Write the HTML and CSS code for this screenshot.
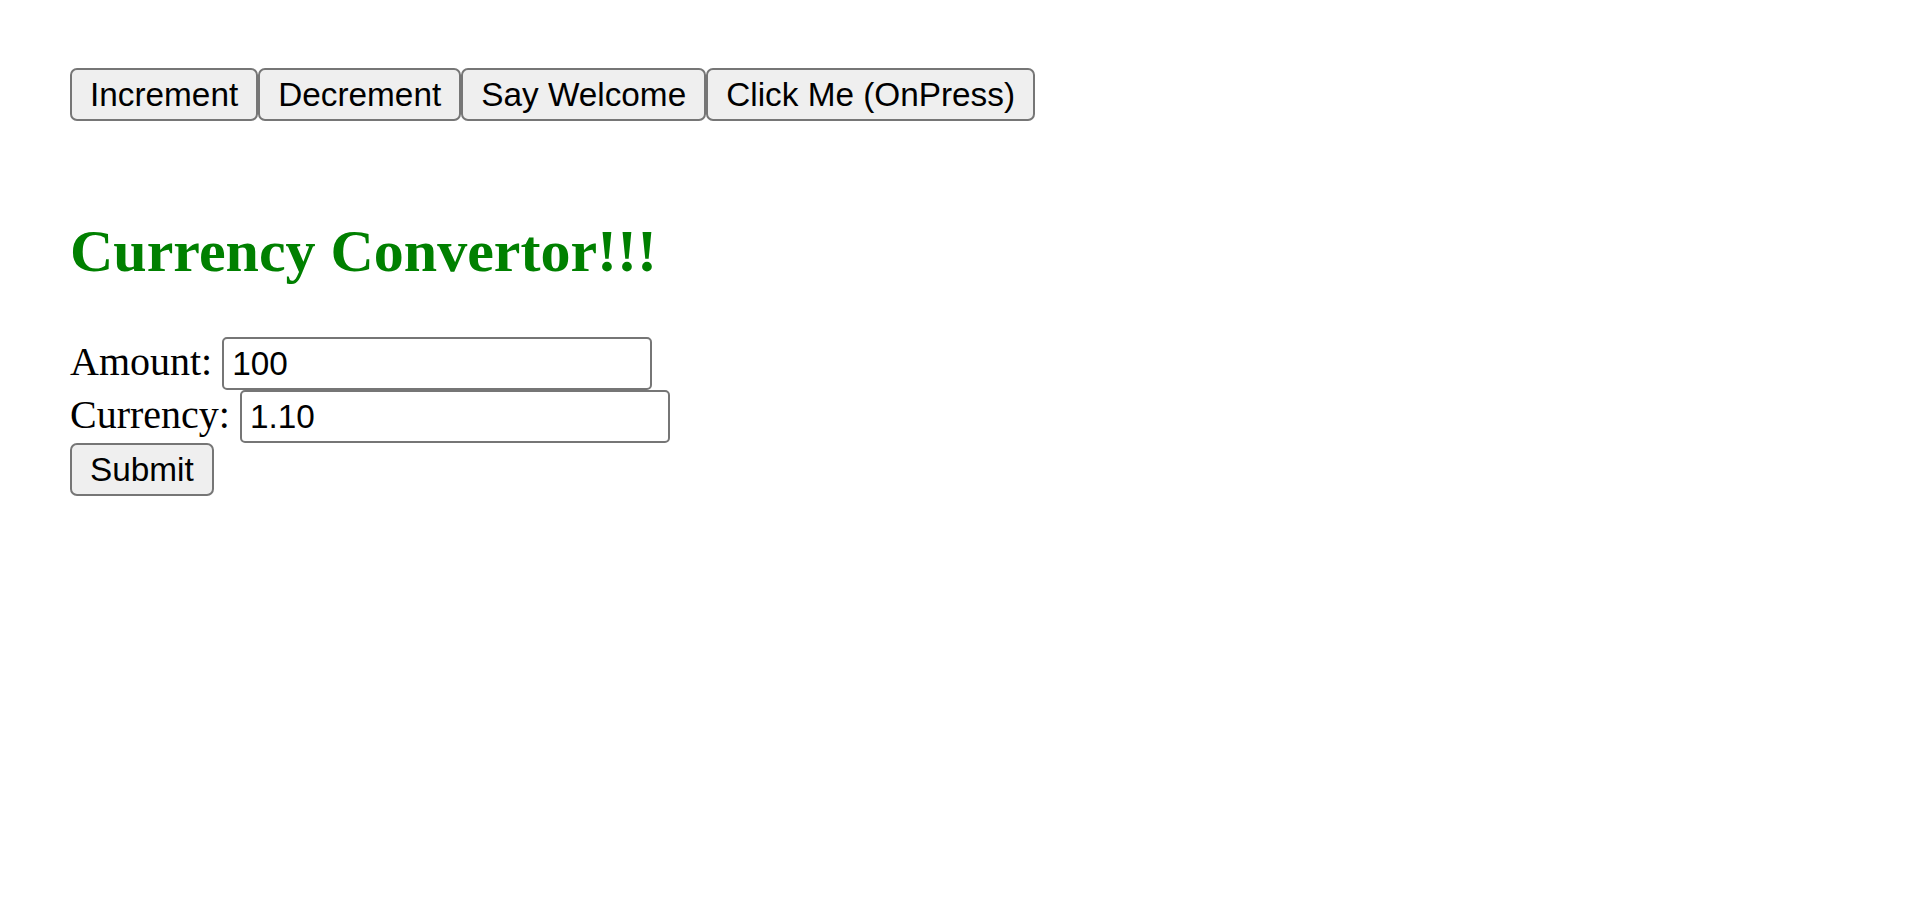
FILE: index.html
```html
<!DOCTYPE html>
<html>
<head>
<meta charset="utf-8">
<title>Currency Convertor</title>
<link rel="stylesheet" href="styles.css">
</head>
<body>
<div class="page">
  <div class="toolbar">
    <button class="btn">Increment</button><button class="btn">Decrement</button><button class="btn">Say Welcome</button><button class="btn">Click Me (OnPress)</button>
  </div>
  <h2 class="title">Currency Convertor!!!</h2>
  <form class="form">
    <div class="row">Amount: <input class="field" type="text" value="100"></div>
    <div class="row">Currency: <input class="field" type="text" value="1.10"></div>
    <div class="row"><button class="btn" type="button">Submit</button></div>
  </form>
</div>
</body>
</html>
```

FILE: styles.css
```css
html, body {
  margin: 0;
  padding: 0;
  background: #ffffff;
}
body {
  font-family: "Liberation Serif", "Times New Roman", serif;
  font-size: 40px;
  color: #000000;
}
.page {
  padding: 68px 0 0 70px;
}
.toolbar {
  display: flex;
  align-items: flex-start;
}
.btn {
  font-family: "Liberation Sans", Arial, sans-serif;
  font-size: 33.33px;
  line-height: normal;
  color: #000000;
  background: #efefef;
  border: 2.5px solid #767676;
  border-radius: 7px;
  padding: 5.5px 18px;
  margin: 0;
}
.title {
  font-family: "Liberation Serif", "Times New Roman", serif;
  font-size: 60px;
  font-weight: bold;
  color: #008000;
  line-height: normal;
  margin: 96px 0 51px 0;
}
.form {
  margin: 0;
}
.row {
  line-height: normal;
}
.field {
  font-family: "Liberation Sans", Arial, sans-serif;
  font-size: 33.33px;
  width: 430px;
  box-sizing: border-box;
  padding: 5.5px 8px;
  border: 2.5px solid #767676;
  border-radius: 5px;
  margin: 0;
  color: #000000;
  background: #ffffff;
}
```
